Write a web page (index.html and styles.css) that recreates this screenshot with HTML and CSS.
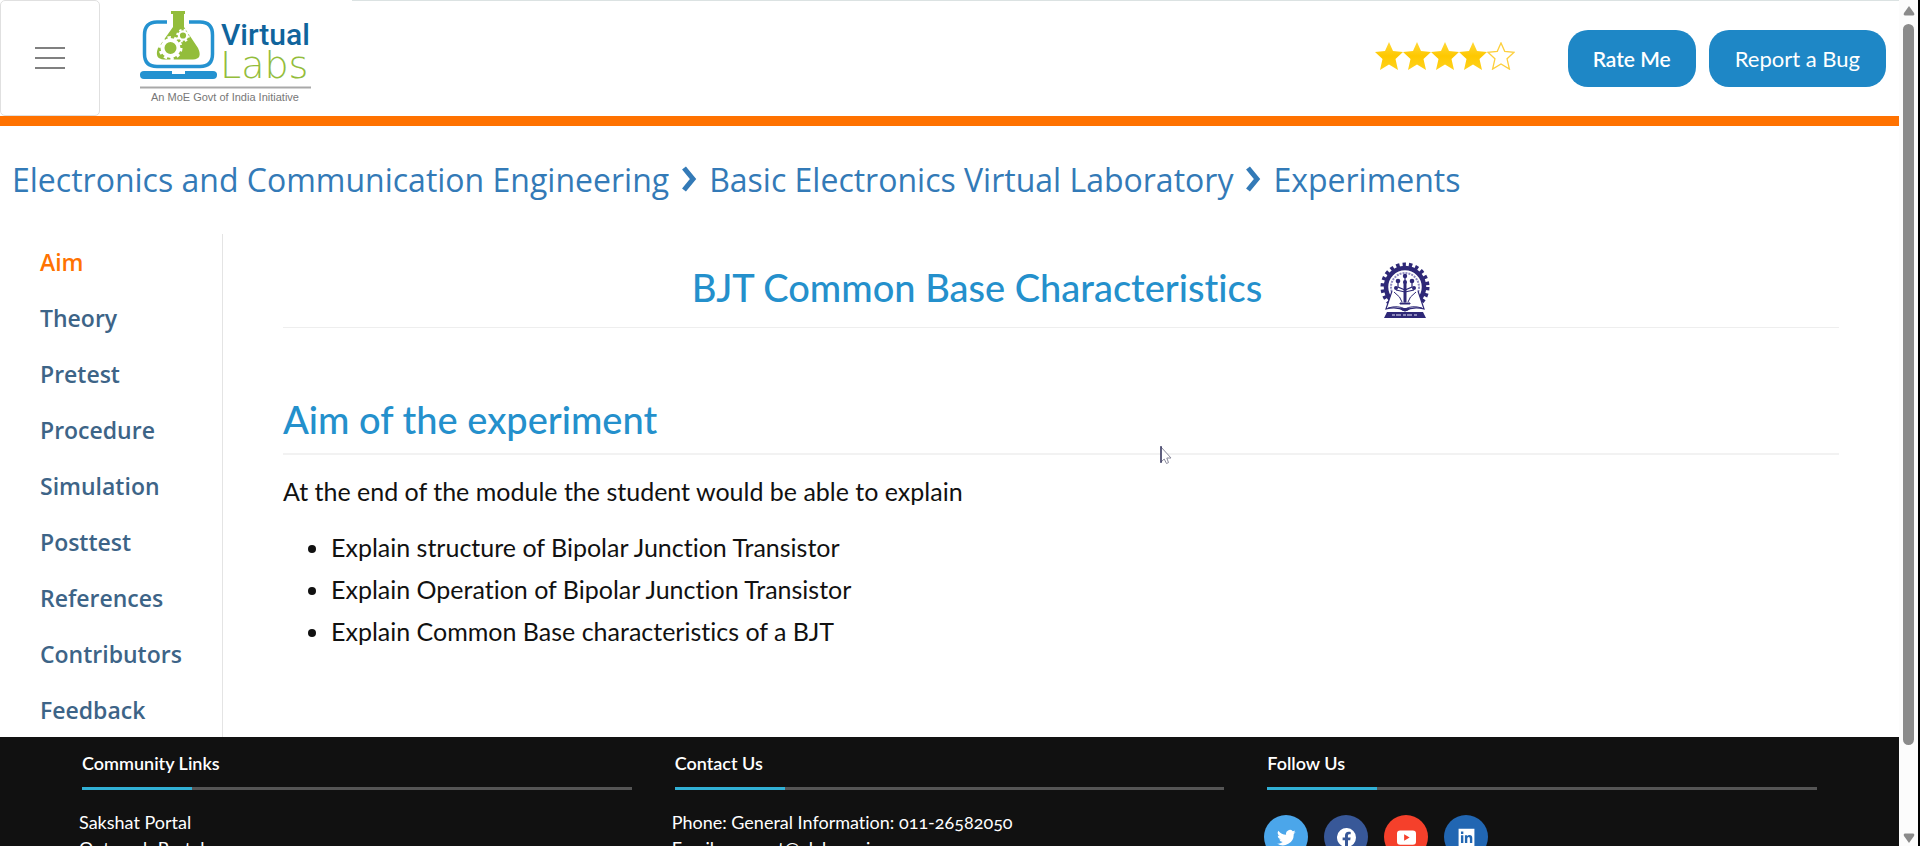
FILE: index.html
```html
<!DOCTYPE html>
<html lang="en">
<head>
<meta charset="utf-8">
<title>Virtual Labs</title>
<link rel="stylesheet" href="styles.css">
</head>
<body>
<svg class="defs" width="0" height="0" aria-hidden="true">
  <defs>
    <linearGradient id="gold" x1="0" y1="0" x2="0" y2="1"><stop offset="0" stop-color="#ffd83a"/><stop offset=".5" stop-color="#fec800"/><stop offset="1" stop-color="#ffd21c"/></linearGradient>
    <path id="star" d="M14 0 18 9 28 10 20.500 17 23 28 14 22.500 5 28 7.500 17 0 10 10 9Z"/>
  </defs>
</svg>
<div class="page">
  <header class="header">
    <button class="menu" type="button" aria-label="Menu"><span></span><span></span><span></span></button>
    <a class="brand" href="#" aria-label="Virtual Labs">
      <svg width="174" height="96" viewBox="0 0 174 96">
        <path d="M27 12H17Q4.500 12 4.500 25V44Q4.500 56.500 17 56.500H60Q72.500 56.500 72.500 44V25Q72.500 12 60 12H49" fill="none" stroke="#2492d0" stroke-width="3.500"/>
        <path d="M4 61H32V64H45V61H73Q77 61 77 64.500V65Q77 69 73 69H4Q0 69 0 65V64.500Q0 61 4 61Z" fill="#2492d0"/>
        <path d="M31 1H45V4H44V17L58 38Q63 49 53 49.500H24Q14 49 18 38L33 17V4H31Z" fill="#93bd3b"/>
        <circle cx="30.500" cy="38" r="8" fill="none" stroke="#fff" stroke-width="4"/>
        <circle cx="30.500" cy="38" r="10.500" fill="none" stroke="#fff" stroke-width="3" stroke-dasharray="3.300 3.300"/>
        <circle cx="43" cy="25.500" r="4.200" fill="none" stroke="#fff" stroke-width="2.200"/>
        <circle cx="43" cy="25.500" r="5.800" fill="none" stroke="#fff" stroke-width="2" stroke-dasharray="2.280 2.280"/>
        <text class="logo-virtual" x="81" y="35">Virtual</text>
        <text class="logo-labs" x="80" y="68">Labs</text>
        <path d="M0 77.500H171" stroke="#a9a9a9" stroke-width="2"/>
        <text class="logo-tag" x="11" y="91">An MoE Govt of India Initiative</text>
      </svg>
    </a>
    <div class="actions">
      <div class="stars" role="img" aria-label="4 out of 5 stars">
        <svg viewBox="0 0 28 28"><use href="#star" fill="url(#gold)"/></svg>
        <svg viewBox="0 0 28 28"><use href="#star" fill="url(#gold)"/></svg>
        <svg viewBox="0 0 28 28"><use href="#star" fill="url(#gold)"/></svg>
        <svg viewBox="0 0 28 28"><use href="#star" fill="url(#gold)"/></svg>
        <svg viewBox="-1 -1 30 30"><use href="#star" fill="#fff" stroke="#fdcf3c" stroke-width="1.400"/></svg>
      </div>
      <button class="pill pill-strong" type="button">Rate Me</button>
      <button class="pill" type="button">Report a Bug</button>
    </div>
  </header>

  <nav class="crumbs" aria-label="Breadcrumb">
    <a href="#">Electronics and Communication Engineering</a>
    <svg viewBox="0 0 16 28"><path d="M3 3 12 14 3 25" /></svg>
    <a href="#">Basic Electronics Virtual Laboratory</a>
    <svg viewBox="0 0 16 28"><path d="M3 3 12 14 3 25" /></svg>
    <a href="#">Experiments</a>
  </nav>

  <div class="body">
    <nav class="side" aria-label="Experiment sections">
      <a class="current" href="#">Aim</a>
      <a href="#">Theory</a>
      <a href="#">Pretest</a>
      <a href="#">Procedure</a>
      <a href="#">Simulation</a>
      <a href="#">Posttest</a>
      <a href="#">References</a>
      <a href="#">Contributors</a>
      <a href="#">Feedback</a>
    </nav>
    <main class="content">
      <div class="title-row">
        <h1>BJT Common Base Characteristics</h1>
        <svg class="emblem" viewBox="0 0 50 56" role="img" aria-label="Institute emblem">
          <circle cx="25" cy="25" r="22.500" fill="none" stroke="#2e2877" stroke-width="4" stroke-dasharray="3.400 3.030"/>
          <circle cx="25" cy="25" r="19" fill="#fff" stroke="#2e2877" stroke-width="4.500"/>
          <circle cx="25" cy="25" r="14" fill="none" stroke="#8f8bc0" stroke-width="2" stroke-dasharray="2 1"/>
          <path d="M14 28 36 28 46 50H4Z" fill="#fff"/>
          <path d="M12 29 6 47Q17 44 25 49Q33 44 44 47L38 29" fill="#fff" stroke="#2e2877" stroke-width="1.200"/>
          <path d="M8 46Q18 43 25 47Q32 43 42 46M14 30Q21 35 22 40M36 30Q29 35 28 40" fill="none" stroke="#2e2877"/>
          <path d="M24 40V20H26V40ZM20 41H30V42H20Z" fill="#2e2877" stroke="#2e2877"/>
          <path d="M25 28 18 25V20M25 28 32 25V20M25 22V14M25 30 16 28M25 30 34 28" fill="none" stroke="#2e2877" stroke-width="1.200"/>
          <g fill="#2e2877"><circle cx="25" cy="14" r="2.200"/><circle cx="18" cy="19" r="2.300"/><circle cx="32" cy="19" r="2.300"/><circle cx="16" cy="26" r="2"/><circle cx="34" cy="26" r="2"/><circle cx="25" cy="20" r="2"/></g>
          <path d="M20 46H30L27 49H23ZM7 50H43L46 56H4Z" fill="#2e2877"/>
          <path d="M12 53H38" stroke="#aaa7d0" stroke-width="1.600" stroke-dasharray="3 1 5 2"/>
        </svg>
      </div>
      <section>
        <h2>Aim of the experiment</h2>
        <p>At the end of the module the student would be able to explain</p>
        <ul>
          <li>Explain structure of Bipolar Junction Transistor</li>
          <li>Explain Operation of Bipolar Junction Transistor</li>
          <li>Explain Common Base characteristics of a BJT</li>
        </ul>
      </section>
    </main>
  </div>

  <footer class="footer">
    <section>
      <h3>Community Links</h3>
      <div class="rule"></div>
      <div class="links"><a href="#">Sakshat Portal</a><a href="#">Outreach Portal</a></div>
    </section>
    <section>
      <h3>Contact Us</h3>
      <div class="rule"></div>
      <div class="links"><span>Phone: General Information: 011-26582050</span><span>Email: support@vlabs.ac.in</span></div>
    </section>
    <section>
      <h3>Follow Us</h3>
      <div class="rule"></div>
      <div class="social">
        <a class="twitter" href="#" aria-label="Twitter"><svg viewBox="0 0 24 24"><path d="M23.600 4.900a9.600 9.600 0 0 1-2.800.8 4.800 4.800 0 0 0 2.100-2.700 9.600 9.600 0 0 1-3 1.200 4.800 4.800 0 0 0-8.300 4.400A13.700 13.700 0 0 1 1.700 3.500a4.800 4.800 0 0 0 1.500 6.500A4.800 4.800 0 0 1 1 9.400a4.800 4.800 0 0 0 3.900 4.800 4.800 4.800 0 0 1-2.200.1 4.800 4.800 0 0 0 4.500 3.400A9.700 9.700 0 0 1 0 19.700a13.700 13.700 0 0 0 21.100-12.200 9.600 9.600 0 0 0 2.500-2.600Z"/></svg></a>
        <a class="facebook" href="#" aria-label="Facebook"><svg viewBox="0 0 24 24"><path d="M24 12a12 12 0 1 0-13.900 11.900v-8.400H7.100V12h3V9.400c0-3 1.800-4.700 4.500-4.700 1.300 0 2.700.2 2.700.2v3h-1.500c-1.500 0-2 .9-2 1.900V12h3.400l-.5 3.500h-2.800v8.400A12 12 0 0 0 24 12Z"/></svg></a>
        <a class="youtube" href="#" aria-label="YouTube"><svg viewBox="0 0 24 24"><path fill-rule="evenodd" d="M4 3H20Q24 3 24 7V17Q24 21 20 21H4Q0 21 0 17V7Q0 3 4 3ZM9 8V16L16 12Z"/></svg></a>
        <a class="linkedin" href="#" aria-label="LinkedIn"><svg viewBox="0 0 24 24"><path fill-rule="evenodd" d="M2 1H22V23H2ZM5 9H8V19H5ZM5 4.500H8V7.500H5ZM10 9H12.800V10.500Q13.800 8.800 15.800 8.800 19.300 8.800 19.300 13V19H16.300V13.600Q16.300 11.400 14.800 11.400 13 11.400 13 13.600V19H10Z"/></svg></a>
      </div>
    </section>
  </footer>
</div>
<div class="scroll" aria-hidden="true">
  <svg viewBox="0 0 12 10"><path d="M6 0 11 7Q12 9 10 9.500H2Q0 9 1 7Z"/></svg>
  <div class="track"><div class="thumb"></div></div>
  <svg viewBox="0 0 12 10"><path d="M6 10 11 3Q12 1 10 .5H2Q0 1 1 3Z"/></svg>
</div>
<svg class="pointer" viewBox="0 0 12 19" aria-hidden="true"><path d="M1 1V16L4.200 13 6.500 17.500 8.500 16.600 6.800 12H11Z" fill="#fff" stroke="#8a8a9c"/><path d="M1 0V17" stroke="#1c1c4a" stroke-width="1.200"/></svg>
</body>
</html>
```
FILE: styles.css
```css
* { box-sizing: border-box; }
body {
  margin: 0;
  display: flex;
  height: 100vh;
  overflow: hidden;
  background: #fff;
  color: #111;
  font-family: Lato, "Open Sans", sans-serif;
  font-variant-ligatures: none;
}
a { color: inherit; text-decoration: none; }
h1, h2, h3, p, ul { margin: 0; font-weight: 400; }
.defs { position: absolute; }
.page { flex: 1; min-width: 0; height: 100%; overflow: hidden; }

.header {
  display: flex;
  align-items: flex-start;
  height: 126px;
  border-bottom: 10px solid #ff7200;
}
.menu {
  display: flex;
  flex-direction: column;
  justify-content: center;
  align-items: center;
  gap: 8px;
  width: 100px;
  height: 116px;
  padding: 0;
  border: 1px solid #e0e0e0;
  border-radius: 5px;
  background: #fff;
}
.menu span { width: 30px; height: 2px; background: #808080; }
.brand { padding: 10px 0 0 40px; }
.brand svg { display: block; }
.logo-virtual { font: 500 30px Roboto, sans-serif; fill: #10649c; }
.logo-labs { font: 200 38px "DejaVu Sans", sans-serif; fill: #93bd3b; }
.logo-tag { font: 11px "Liberation Sans", sans-serif; fill: #777; }
.actions {
  display: flex;
  flex: 1;
  align-items: center;
  justify-content: flex-end;
  height: 116px;
  margin-left: 38px;
  padding-right: 13px;
  border-top: 1px solid #dbe2e2;
}
.stars { display: flex; margin-right: 40px; padding-bottom: 5px; }
.stars svg { width: 28px; height: 28px; }
.pill {
  height: 57px;
  margin-left: 13px;
  padding: 0 26px;
  border: 0;
  border-radius: 20px;
  background: #1e87c6;
  color: #fff;
  font: 400 22px Lato, sans-serif;
}
.pill-strong { padding: 0 25px; font-size: 21px; font-weight: 600; }

.crumbs {
  display: flex;
  align-items: center;
  gap: 12px;
  height: 108px;
  padding: 0 12px 2px;
  color: #337ab7;
  font: 32px "Open Sans", sans-serif;
}
.crumbs svg { width: 16px; height: 28px; fill: none; stroke: #337ab7; stroke-width: 5; }

.body { display: flex; height: 503px; }
.side {
  width: 223px;
  padding-left: 40px;
  border-right: 1px solid #e4e4e4;
  color: #3d6487;
  font: 600 23px/56px "Open Sans", sans-serif;
}
.side a { display: block; }
.side .current { color: #ff7200; }
.content { flex: 1; padding: 0 60px; font-size: 25px; }
.title-row {
  display: flex;
  align-items: center;
  justify-content: center;
  gap: 118px;
  height: 94px;
  padding-top: 18px;
  border-bottom: 1px solid #eee;
}
h1, h2 { color: #2490cc; font-size: 38px; font-weight: 500; line-height: 48px; }
h1 { padding-bottom: 6px; }
.emblem { width: 50px; height: 56px; }
h2 { padding: 67px 0 10px; border-bottom: 2px solid #f2f2f2; }
.content p { padding: 15px 0 14px; line-height: 42px; }
.content ul { padding-left: 48px; line-height: 42px; }

.footer {
  display: grid;
  grid-template-columns: repeat(3, 1fr);
  gap: 43px;
  height: 300px;
  padding: 12px 82px;
  background: #111;
  color: #fff;
}
.footer h3 { font-size: 18px; font-weight: 600; line-height: 28px; }
.rule { height: 3px; margin: 10px 0 19px; background: linear-gradient(90deg, #31b0d5 20%, #555 20%); }
.links {
  display: flex;
  flex-direction: column;
  margin-left: -3px;
  font-size: 18px;
  line-height: 26px;
  font-variant-numeric: oldstyle-nums;
}
.social { display: flex; gap: 16px; margin: 25px 0 0 -3px; }
.social a { display: grid; place-items: center; width: 44px; height: 44px; border-radius: 50%; }
.social svg { width: 19px; height: 19px; fill: #fff; }
.twitter { background: #4ba6ea; }
.facebook { background: #385898; }
.youtube { background: #f5402b; }
.linkedin { background: #2166b2; }

.scroll {
  display: flex;
  flex-direction: column;
  align-items: center;
  gap: 8px;
  width: 21px;
  height: 100%;
  padding: 6px 0 3px;
  border-right: 2px solid #000;
  background: #fcfcfc;
}
.scroll svg { width: 12px; height: 10px; fill: #8b8b8b; }
.track { flex: 1; width: 11px; }
.thumb { height: 90%; border-radius: 6px; background: #8b8b8b; }
.pointer { position: absolute; left: 1160px; top: 446px; width: 12px; height: 19px; }
```
